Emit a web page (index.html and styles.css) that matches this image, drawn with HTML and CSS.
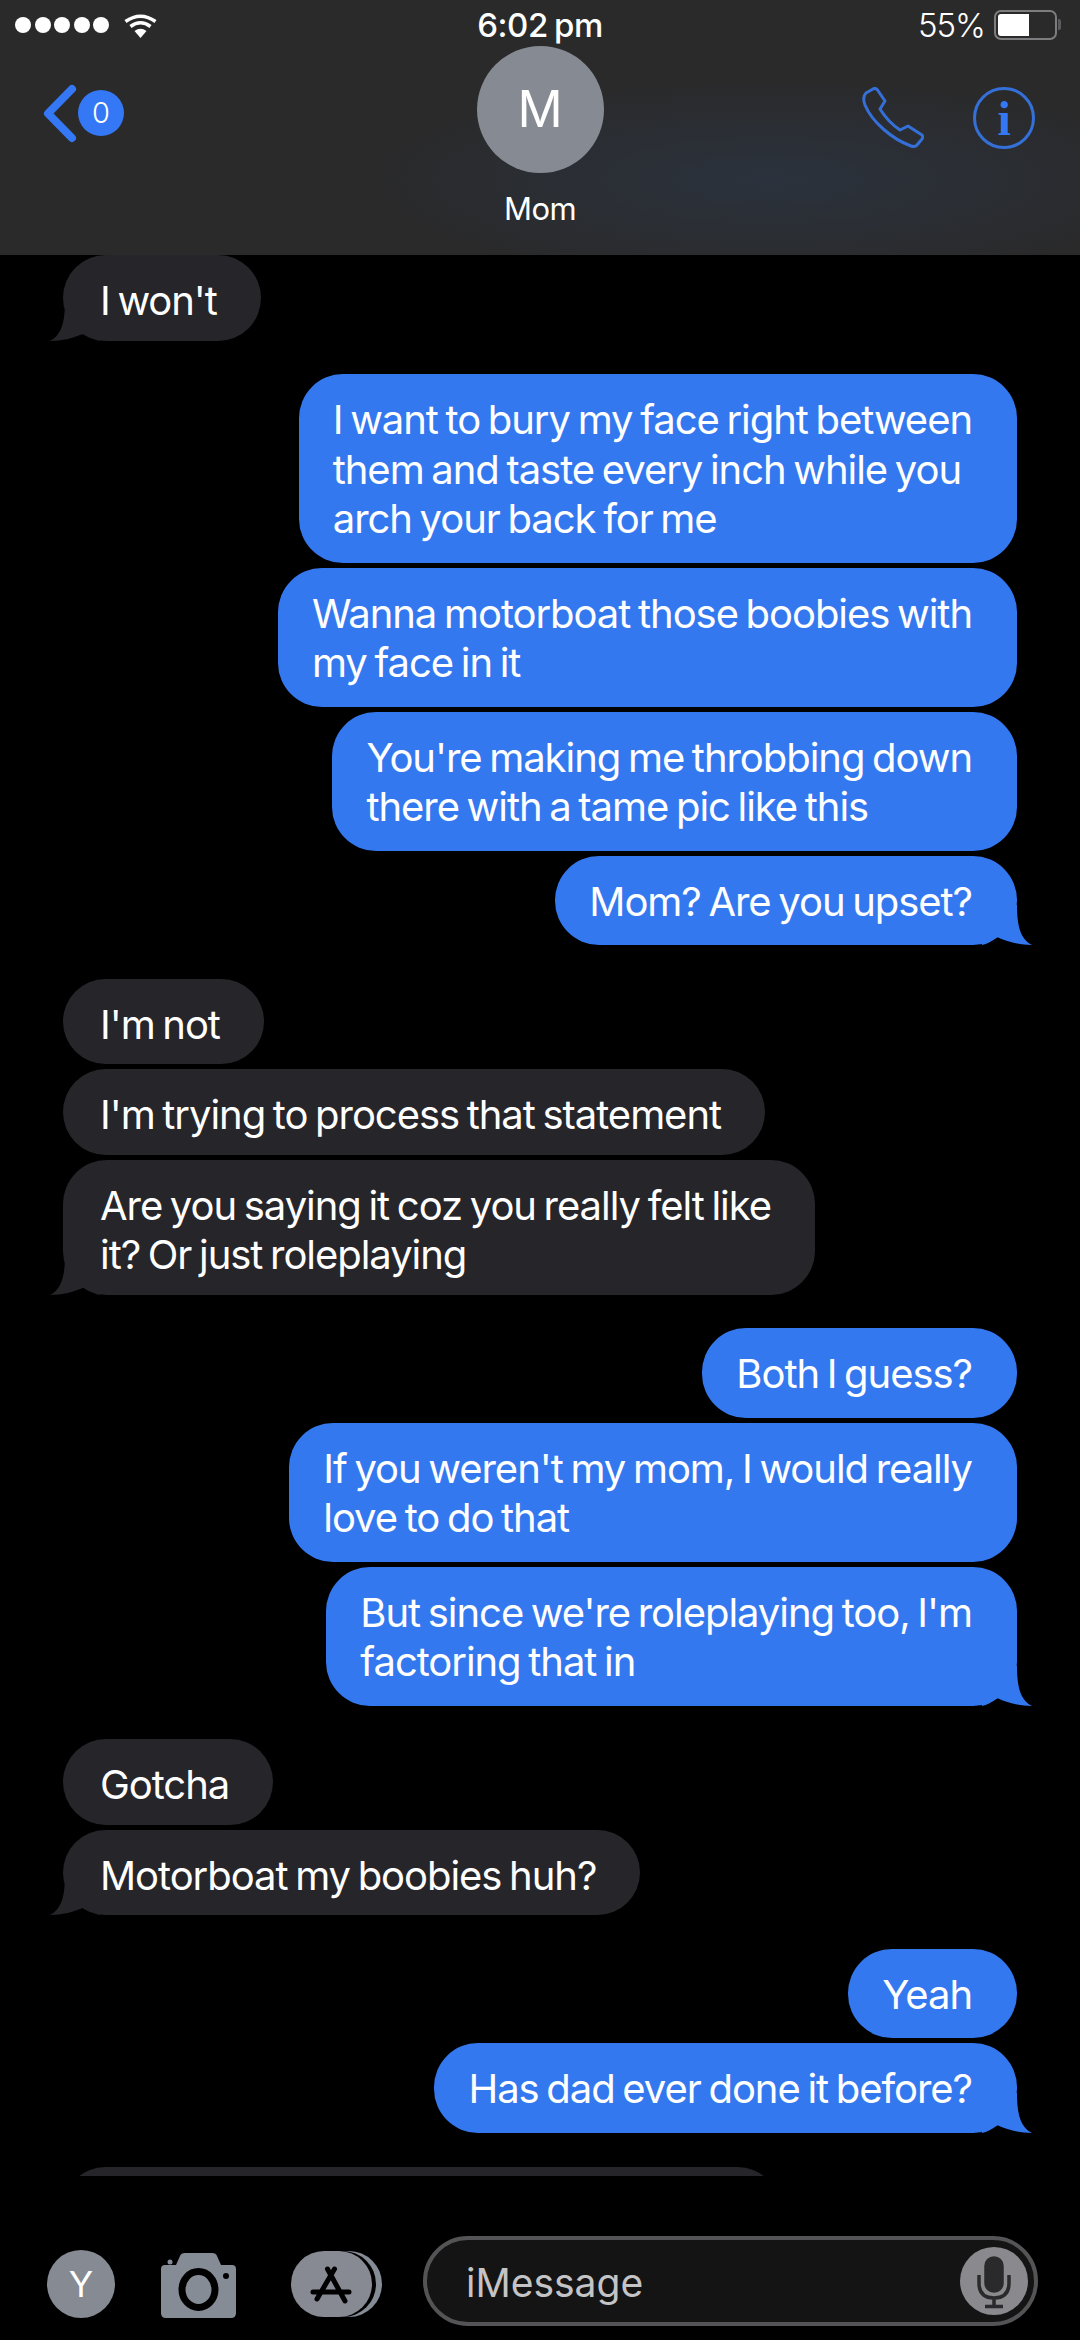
FILE: index.html
```html
<!DOCTYPE html>
<html lang="en">

<head>
    <meta charset="UTF-8">
    <meta name="viewport" content="width=device-width, initial-scale=1.0">
    <title>Mom</title>
    <link rel="stylesheet" href="styles.css">
</head>

<body>
    <header class="top">
        <div class="status">
            <div class="status-left">
                <span class="signal"><i></i><i></i><i></i><i></i><i></i></span>
                <svg class="wifi" viewBox="0 0 33 25">
                    <path d="M1.5 8.5 Q16.5 -2 31.5 8.5" />
                    <path d="M6.5 13.5 Q16.5 6 26.5 13.5" />
                    <path class="wedge" d="M10.5 18 Q16.5 13.5 22.5 18 L16.5 25 Z" />
                </svg>
            </div>
            <div class="clock">6:02 pm</div>
            <div class="status-right">
                <span>55%</span>
                <div class="battery"><div class="battery-fill"></div></div>
            </div>
        </div>
        <nav class="nav">
            <div class="back">
                <svg class="chevron" viewBox="0 0 34 59">
                    <path d="M29 5 L5 29.5 L29 54" />
                </svg>
                <span class="badge">0</span>
            </div>
            <div class="contact">
                <div class="avatar">M</div>
                <div class="name">Mom</div>
            </div>
            <div class="actions">
                <svg class="phone" viewBox="0 0 62 62">
                    <path d="M11 2 Q13.5 0.5 15.5 3 L23 14 L18 22 Q26 35 38 43 L46 39 L60 48 Q61.5 50 60 52 L55 58 Q53 60.5 49 59 C30 52 10 35 3 18 Q0 10 4 6 Z" />
                </svg>
                <svg class="info" viewBox="0 0 62 62">
                    <circle cx="31" cy="31" r="29.5" />
                    <text x="31" y="48" text-anchor="middle">i</text>
                </svg>
            </div>
        </nav>
    </header>

    <main class="thread">
        <section class="group in">
            <div class="bubble tailed">I won't
                <svg class="tail" viewBox="0 0 50 50"><path d="M35 10 C35 30 38 44 50 50 C38 50 26 47 15 42 C10 46 5 49 0 50 L0 10 Z" /></svg>
            </div>
        </section>
        <section class="group out">
            <div class="bubble">I want to bury my face right between<br>them and taste every inch while you<br>arch your back for me</div>
            <div class="bubble">Wanna motorboat those boobies with<br>my face in it</div>
            <div class="bubble">You're making me throbbing down<br>there with a tame pic like this</div>
            <div class="bubble tailed">Mom? Are you upset?
                <svg class="tail" viewBox="0 0 50 50"><path d="M35 10 C35 30 38 44 50 50 C38 50 26 47 15 42 C10 46 5 49 0 50 L0 10 Z" /></svg>
            </div>
        </section>
        <section class="group in">
            <div class="bubble">I'm not</div>
            <div class="bubble">I'm trying to process that statement</div>
            <div class="bubble tailed">Are you saying it coz you really felt like<br>it? Or just roleplaying
                <svg class="tail" viewBox="0 0 50 50"><path d="M35 10 C35 30 38 44 50 50 C38 50 26 47 15 42 C10 46 5 49 0 50 L0 10 Z" /></svg>
            </div>
        </section>
        <section class="group out">
            <div class="bubble">Both I guess?</div>
            <div class="bubble">If you weren't my mom, I would really<br>love to do that</div>
            <div class="bubble tailed">But since we're roleplaying too, I'm<br>factoring that in
                <svg class="tail" viewBox="0 0 50 50"><path d="M35 10 C35 30 38 44 50 50 C38 50 26 47 15 42 C10 46 5 49 0 50 L0 10 Z" /></svg>
            </div>
        </section>
        <section class="group in">
            <div class="bubble">Gotcha</div>
            <div class="bubble tailed">Motorboat my boobies huh?
                <svg class="tail" viewBox="0 0 50 50"><path d="M35 10 C35 30 38 44 50 50 C38 50 26 47 15 42 C10 46 5 49 0 50 L0 10 Z" /></svg>
            </div>
        </section>
        <section class="group out">
            <div class="bubble">Yeah</div>
            <div class="bubble tailed">Has dad ever done it before?
                <svg class="tail" viewBox="0 0 50 50"><path d="M35 10 C35 30 38 44 50 50 C38 50 26 47 15 42 C10 46 5 49 0 50 L0 10 Z" /></svg>
            </div>
        </section>
        <section class="group in">
            <div class="bubble cut-off"></div>
        </section>
    </main>

    <footer class="composer">
        <div class="me">Y</div>
        <svg class="camera" viewBox="0 0 75 65">
            <path class="cam-body" d="M4 12 H15 L19 3 Q20 0 24 0 H51 Q55 0 56 3 L60 12 H71 Q75 12 75 16 V60 Q75 65 70 65 H5 Q0 65 0 60 V16 Q0 12 4 12 Z" />
            <circle class="cam-flash" cx="9" cy="9" r="2.5" />
            <circle class="cam-dot" cx="65" cy="23" r="3" />
            <ellipse class="cam-lens" cx="37.5" cy="36.5" rx="16.5" ry="18" />
        </svg>
        <svg class="apps" viewBox="0 0 91 66">
            <circle class="apps-back" cx="58" cy="33" r="33" />
            <rect class="apps-gap" x="0" y="0" width="85" height="66" rx="33" />
            <rect class="apps-front" x="0" y="0" width="81" height="66" rx="33" />
            <path class="apps-glyph" d="M43.5 18 L26 48 M36.5 18 L54 50 M22 41 H58" />
        </svg>
        <div class="input">
            <span class="placeholder">iMessage</span>
            <div class="mic">
                <svg viewBox="0 0 68 68">
                    <rect class="mic-head" x="26" y="11" width="16" height="33" rx="8" />
                    <path d="M19 28 V36 Q19 51 34 51 Q49 51 49 36 V28 M34 51 V59 M25 59.5 H43" />
                </svg>
            </div>
        </div>
    </footer>
</body>

</html>
```

FILE: styles.css
```css
* {
    margin: 0;
    padding: 0;
    box-sizing: border-box;
}

body {
    width: 1080px;
    height: 2340px;
    display: flex;
    flex-direction: column;
    overflow: hidden;
    background: #000;
    color: #fff;
    font-family: Inter, "Noto Sans", sans-serif;
}

/* header */
.top {
    height: 255px;
    flex-shrink: 0;
    background: radial-gradient(ellipse 400px 100px at 770px 180px, #2b323d, rgba(43, 50, 61, 0)), #2a2a2b;
}

.status {
    height: 46px;
    display: grid;
    grid-template-columns: 1fr auto 1fr;
    align-items: center;
    font-size: 33px;
    padding: 4px 15px 0 15px;
}

.status-left {
    display: flex;
    align-items: center;
    gap: 15px;
}

.signal {
    display: flex;
    gap: 3.5px;
}

.signal i {
    width: 16px;
    height: 16px;
    border-radius: 50%;
    background: #fff;
}

.wifi {
    width: 33px;
    height: 25px;
}

.wifi path {
    fill: none;
    stroke: #fff;
    stroke-width: 3.5;
}

.wifi .wedge {
    fill: #fff;
    stroke: none;
}

.clock {
    font-weight: 500;
    letter-spacing: -0.5px;
    word-spacing: -2px;
}

.status-right {
    display: flex;
    align-items: center;
    justify-content: flex-end;
    gap: 9px;
    padding-right: 8px;
    letter-spacing: -1px;
    font-weight: 300;
}

.battery {
    position: relative;
    width: 63px;
    height: 30px;
    border: 2.5px solid #7d7d7f;
    border-radius: 7px;
    padding: 2px;
}

/* the little nub on the battery's right end */
.battery::after {
    content: "";
    position: absolute;
    top: 7px;
    right: -6px;
    width: 3px;
    height: 11px;
    background: #5c5c5e;
    border-radius: 0 2px 2px 0;
}

.battery-fill {
    width: 31px;
    height: 100%;
    background: #fff;
    border-radius: 3px 0 0 3px;
}

.nav {
    display: grid;
    grid-template-columns: 1fr auto 1fr;
    padding: 0 43px;
}

.back {
    display: flex;
    align-items: center;
    height: 134px;
}

.chevron {
    width: 34px;
    height: 59px;
    fill: none;
    stroke: #3478f6;
    stroke-width: 8;
    stroke-linecap: round;
    stroke-linejoin: round;
}

.badge {
    width: 46px;
    height: 46px;
    margin-left: 1px;
    border-radius: 50%;
    background: #3478f6;
    font-size: 29px;
    font-weight: 300;
    line-height: 46px;
    text-align: center;
}

.contact {
    display: flex;
    flex-direction: column;
    align-items: center;
}

.avatar {
    width: 127px;
    height: 127px;
    border-radius: 50%;
    background: #868a92;
    font-size: 50px;
    line-height: 127px;
    text-align: center;
}

.name {
    margin-top: 17px;
    font-size: 31px;
    line-height: 38px;
    letter-spacing: -0.5px;
}

.actions {
    display: flex;
    justify-content: flex-end;
    align-items: flex-start;
    gap: 49px;
    padding: 41px 2px 0 0;
}

.phone,
.info {
    width: 62px;
    height: 62px;
}

.phone path {
    fill: none;
    stroke: #3570d8;
    stroke-width: 3;
    stroke-linejoin: round;
}

.info circle {
    fill: none;
    stroke: #3570d8;
    stroke-width: 3;
}

.info text {
    fill: #3478f6;
    font-family: "Liberation Serif", serif;
    font-size: 49px;
    font-weight: 700;
}

/* messages */
.thread {
    flex: 1;
    display: flex;
    flex-direction: column;
    gap: 33.5px;
    overflow: hidden;
    padding: 0 63px;
}

.group {
    display: flex;
    flex-direction: column;
    gap: 5px;
}

.group.in {
    align-items: flex-start;
}

.group.out {
    align-items: flex-end;
}

.bubble {
    position: relative;
    flex-shrink: 0;
    font-size: 40px;
    line-height: 49.5px;
    letter-spacing: -1.05px;
    word-spacing: -2.5px;
    border-radius: 44px;
}

.in .bubble {
    padding: 21px 44px 15px 37px;
    background: #26252a;
}

.out .bubble {
    padding: 21px 45px 19px 34px;
    background: #3478f0;
}

.tail {
    position: absolute;
    bottom: 0;
    width: 50px;
    height: 50px;
    overflow: visible;
}

.in .tail {
    left: -13px;
    fill: #26252a;
    transform: scaleX(-1);
}

.out .tail {
    right: -15px;
    fill: #3478f0;
}

.in .cut-off {
    width: 717px;
    height: 85px;
    margin-top: 1px;
}

/* bottom bar */
.composer {
    height: 164px;
    flex-shrink: 0;
    display: flex;
    align-items: flex-end;
    padding: 0 42px 14px 47px;
}

.me {
    width: 68px;
    height: 68px;
    margin-bottom: 8px;
    border-radius: 50%;
    background: #868a92;
    font-size: 36px;
    line-height: 68px;
    text-align: center;
}

.camera {
    width: 75px;
    height: 65px;
    margin: 0 55px 8px 46px;
}

.cam-body,
.cam-flash {
    fill: #868c96;
}

.cam-dot {
    fill: #000;
}

.cam-lens {
    fill: none;
    stroke: #000;
    stroke-width: 7;
}

.apps {
    width: 91px;
    height: 66px;
    margin: 0 41px 9px 0;
}

.apps-back {
    fill: #868c96;
}

.apps-gap {
    fill: #000;
}

.apps-front {
    fill: #878a93;
}

.apps-glyph {
    fill: none;
    stroke: #000;
    stroke-width: 5;
    stroke-linecap: round;
}

.input {
    flex: 1;
    height: 90px;
    display: flex;
    align-items: center;
    justify-content: space-between;
    padding: 0 6px 0 39px;
    border: 4px solid #545456;
    border-radius: 45px;
    background: #141414;
}

.placeholder {
    margin-top: 2px;
    font-size: 39px;
    color: #c4c4c6;
}

.mic {
    width: 68px;
    height: 68px;
    border-radius: 50%;
    background: #8a8a8e;
}

.mic svg {
    display: block;
    width: 68px;
    height: 68px;
    fill: none;
    stroke: #2a2a2c;
    stroke-width: 3.5;
}

.mic-head {
    fill: #2a2a2c;
}
```
